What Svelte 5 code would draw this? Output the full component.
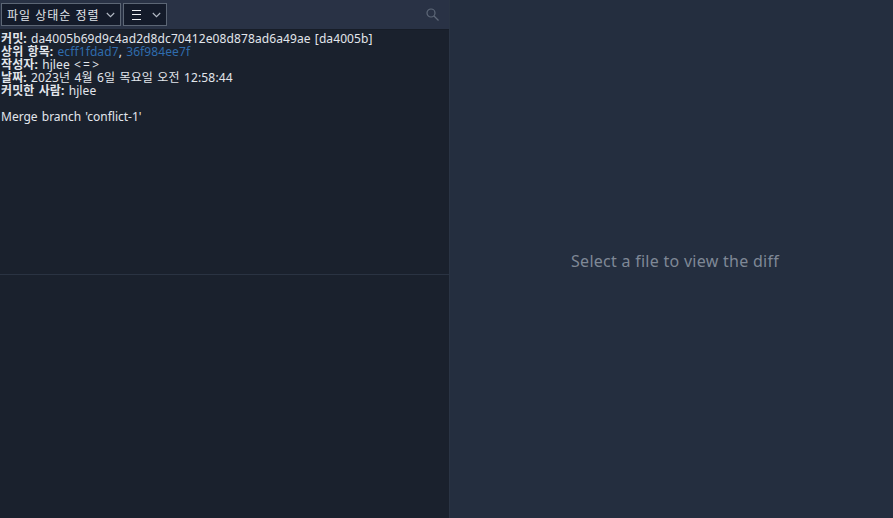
<script lang="ts">
  // Commit detail pane: file list on the left, diff placeholder on the right.
  const commit = {
    hash: "da4005b69d9c4ad2d8dc70412e08d878ad6a49ae",
    short: "da4005b",
    parents: ["ecff1fdad7", "36f984ee7f"],
    author: "hjlee",
    date: "2023년 4월 6일 목요일 오전 12:58:44",
    committer: "hjlee",
    message: "Merge branch 'conflict-1'"
  };
</script>

<div class="app">
  <section class="left">
    <header class="toolbar">
      <button type="button" class="select sort">
        <span>파일 상태순 정렬</span>
        <svg class="chev" viewBox="0 0 9 6" width="9" height="6"><path d="M.8 1 4.5 4.7 8.2 1" /></svg>
      </button>
      <button type="button" class="select view" aria-label="보기">
        <svg class="lines" viewBox="0 0 9 10" width="9" height="10"><path d="M0 .5h9M0 4.5h9M0 9.5h9" /></svg>
        <svg class="chev" viewBox="0 0 9 6" width="9" height="6"><path d="M.8 1 4.5 4.7 8.2 1" /></svg>
      </button>
      <svg class="search" viewBox="0 0 13 13" width="13" height="13" aria-hidden="true">
        <circle cx="5" cy="5" r="4" />
        <path d="M8 8l4.5 4.5" />
      </svg>
    </header>

    <div class="details">
      <div><b>커밋:</b> {commit.hash} [{commit.short}]</div>
      <div>
        <b>상위 항목:</b>
        <span class="link">{commit.parents[0]}</span>, <span class="link">{commit.parents[1]}</span>
      </div>
      <div><b>작성자:</b> {commit.author} <span class="op">&lt;=&gt;</span></div>
      <div><b>날짜:</b> <span class="date">{commit.date}</span></div>
      <div><b>커밋한 사람:</b> {commit.committer}</div>
      <div class="message">{commit.message}</div>
    </div>

    <div class="files"></div>
  </section>

  <main class="right">
    <p>Select a file to view the diff</p>
  </main>
</div>

<style>
  :global(body) {
    margin: 0;
    background: #242e3f;
  }
  .app {
    display: flex;
    height: 518px;
    font-family: "Noto Sans", "Noto Sans CJK KR", sans-serif;
    font-size: 12px;
    color: #e2e6ec;
    overflow: hidden;
  }
  .left {
    width: 449px;
    flex: none;
    display: flex;
    flex-direction: column;
    background: #1a212d;
  }
  .toolbar {
    height: 30px;
    box-sizing: border-box;
    flex: none;
    display: flex;
    align-items: flex-start;
    gap: 2px;
    padding: 3px 0 0 1px;
    background: #293245;
    border-bottom: 1px solid #171d28;
  }
  .select {
    height: 23px;
    box-sizing: border-box;
    display: flex;
    align-items: center;
    margin: 0;
    padding: 0;
    background: #141b2a;
    border: 1px solid #5c6675;
    color: #e2e6ec;
    font: inherit;
    font-size: 12px;
  }
  .sort {
    width: 120px;
    padding-left: 5px;
  }
  .sort span {
    letter-spacing: 1px;
    white-space: nowrap;
  }
  .sort .chev {
    margin-left: auto;
    margin-right: 5px;
  }
  .view {
    width: 44px;
    padding-left: 8px;
  }
  .view .chev {
    margin-left: auto;
    margin-right: 5px;
  }
  .chev path {
    fill: none;
    stroke: #b4bbc6;
    stroke-width: 1.1;
  }
  .lines path {
    fill: none;
    stroke: #f0f2f5;
    stroke-width: 1;
  }
  .search {
    margin: 5px 10px 0 auto;
    fill: none;
    stroke: #5e6878;
    stroke-width: 1.2;
  }
  .details {
    height: 245px;
    box-sizing: border-box;
    flex: none;
    padding: 2px 0 0 1px;
    line-height: 13px;
    letter-spacing: 0.1px;
    word-spacing: 1px;
    white-space: nowrap;
    overflow: hidden;
    border-bottom: 1px solid #2a3342;
  }
  .details b {
    font-weight: 700;
  }
  .link {
    color: #2f6cad;
  }
  .op {
    letter-spacing: 2.2px;
  }
  .date {
    letter-spacing: 0.15px;
  }
  .message {
    margin-top: 13px;
    letter-spacing: 0;
  }
  .files {
    flex: 1;
  }
  .right {
    flex: 1;
    display: flex;
    align-items: center;
    justify-content: center;
    padding-left: 7px;
    background: #242e3f;
    border-left: 1px solid #2a3444;
  }
  .right p {
    margin: 4px 0 0;
    font-size: 16px;
    letter-spacing: 0.27px;
    color: #7f8896;
  }
</style>
